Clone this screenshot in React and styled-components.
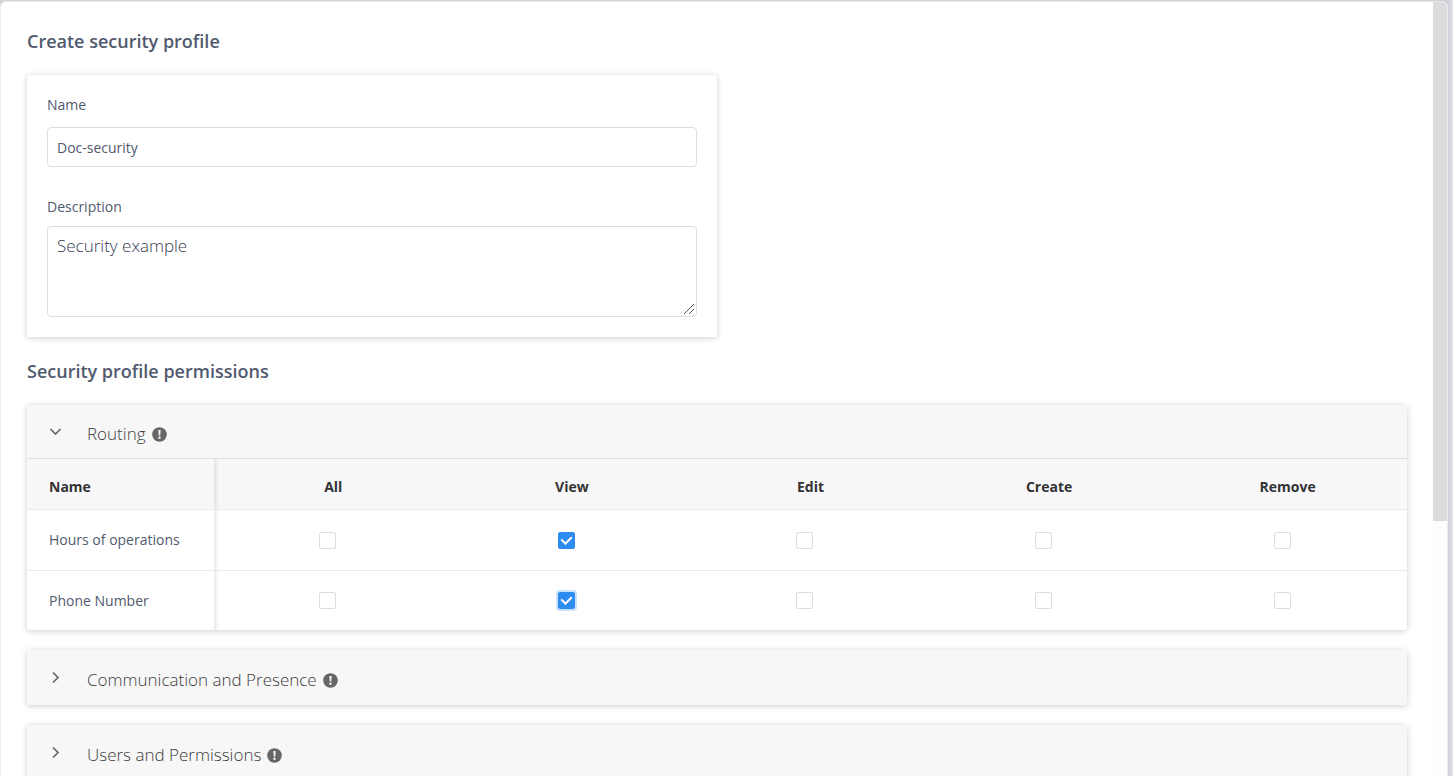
import React, { useState } from 'react';
import styled, { createGlobalStyle } from 'styled-components';

const GlobalStyle = createGlobalStyle`
  * {
    box-sizing: border-box;
  }
  body {
    margin: 0;
    background: #e1e1ea;
    color: #515a6e;
    font-family: 'Open Sans', 'Noto Sans', sans-serif;
    font-size: 14px;
    line-height: 20px;
  }
`;

const Page = styled.div`
  height: 100vh;
  padding: 1px 5px 0 0;
  background: linear-gradient(to right, #d3d3d6 50%, #cfcfd8 calc(100% - 5px), #e1e1ea);
`;

const Panel = styled.main`
  display: flex;
  height: 100%;
  overflow: hidden;
  border: 1px solid #ececee;
  border-bottom: 0;
  border-radius: 6px 6px 0 0;
  background: #fff;
`;

const Content = styled.div`
  flex: 1;
  min-width: 0;
  padding: 27px 26px 20px;
`;

const ScrollTrack = styled.div`
  width: 14px;
  background: #fdfdfd;
`;

const ScrollThumb = styled.div`
  height: 67%;
  background: #dcdcdc;
`;

const Title = styled.h2`
  margin: 0 0 22px;
  font-size: 18px;
  font-weight: 600;
  line-height: 24px;
`;

const Card = styled.section`
  border-radius: 3px;
  background: #fff;
  box-shadow: 0 1px 6px rgba(0, 0, 0, 0.2);
`;

const FormCard = styled(Card)`
  display: flex;
  flex-direction: column;
  gap: 30px;
  width: 50%;
  margin-bottom: 22px;
  padding: 20px;
`;

const Field = styled.div`
  display: flex;
  flex-direction: column;
  gap: ${(p) => p.$gap}px;
`;

const Input = styled.input`
  height: 40px;
  padding: 0 9px;
  border: 1px solid #dcdee2;
  border-radius: 4px;
  outline: none;
  background: #fff;
  color: #515a6e;
  font: inherit;
`;

const TextArea = styled.textarea`
  height: 91px;
  padding: 7px 9px;
  border: 1px solid #dcdee2;
  border-radius: 4px;
  outline: none;
  background: #fff;
  color: #343c50;
  font-family: inherit;
  font-size: 17px;
  font-weight: 300;
  line-height: 24px;
  resize: vertical;

  &::-webkit-resizer {
    background: url("data:image/svg+xml,%3Csvg xmlns='http://www.w3.org/2000/svg' width='15' height='15'%3E%3Cpath d='M3 13L13 3M8 13L13 8' stroke='%23555' fill='none'/%3E%3C/svg%3E")
      no-repeat right bottom;
  }
`;

const Groups = styled.div`
  display: flex;
  flex-direction: column;
  gap: 20px;
`;

const GroupHeader = styled.button`
  display: flex;
  align-items: center;
  width: 100%;
  height: ${(p) => (p.$open ? 54 : 55)}px;
  padding: 4px 21px 0;
  border: 0;
  border-bottom: ${(p) => (p.$open ? '1px solid #dcdee2' : '0')};
  border-radius: ${(p) => (p.$open ? '3px 3px 0 0' : '3px')};
  background: #f7f7f7;
  color: #3c3c3c;
  font-family: inherit;
  font-size: 17px;
  font-weight: 300;
  line-height: 24px;
  text-align: left;
  cursor: pointer;
`;

const Arrow = styled.svg`
  width: 15px;
  height: 15px;
  margin-right: 24px;
  margin-bottom: 4px;
  transform: ${(p) => (p.$open ? 'rotate(90deg)' : 'none')};
`;

const InfoIcon = styled.svg`
  width: 15px;
  height: 15px;
  margin: 2px 0 0 6px;
`;

const Table = styled.table`
  width: 100%;
  table-layout: fixed;
  border-spacing: 0;
`;

const HeadCell = styled.th`
  height: 51px;
  padding: 5px 0 0;
  border-bottom: 1px solid #e8eaec;
  background: #f8f8fa;
  color: #333;
  font-weight: 700;
  text-align: center;
`;

const Cell = styled.td`
  height: 61px;
  padding: 0 11px 0 0;
  border-bottom: 1px solid #e8eaec;
  text-align: center;

  tr:last-child > & {
    height: 59px;
    border-bottom: 0;
  }
`;

const edgeShadow = `
  position: relative;
  padding-left: 22px;
  text-align: left;

  &::after {
    content: '';
    position: absolute;
    top: 0;
    bottom: 0;
    left: 100%;
    width: 5px;
    background: linear-gradient(to right, rgba(0, 0, 0, 0.09), rgba(0, 0, 0, 0));
  }
`;

const NameHeadCell = styled(HeadCell)`
  width: 187px;
  ${edgeShadow}
`;

const NameCell = styled(Cell).attrs({ as: 'th', scope: 'row' })`
  font-weight: 400;
  ${edgeShadow}
`;

const Checkbox = styled.input.attrs({ type: 'checkbox' })`
  appearance: none;
  display: grid;
  place-content: center;
  width: 17px;
  height: 17px;
  margin: 0 auto;
  border: 1px solid #dcdee2;
  border-radius: 2px;
  outline: none;
  background: #fff;
  cursor: pointer;

  &:checked {
    border-color: #2d8cf0;
    background: #2d8cf0;
    box-shadow: ${(p) => (p.$active ? '0 0 0 2px rgba(45, 140, 240, 0.25)' : 'none')};
  }

  &:checked::after {
    content: '';
    width: 5px;
    height: 8px;
    margin-bottom: 3px;
    border: solid #fff;
    border-width: 0 2px 2px 0;
    transform: rotate(45deg);
  }
`;

const columns = ['All', 'View', 'Edit', 'Create', 'Remove'];
const permissions = ['Hours of operations', 'Phone Number'];

function PermissionTable() {
  const [checked, setChecked] = useState({
    'Hours of operations-View': true,
    'Phone Number-View': true,
  });
  const [active, setActive] = useState('Phone Number-View');

  const toggle = (key) => {
    setChecked({ ...checked, [key]: !checked[key] });
    setActive(key);
  };

  return (
    <Table>
      <thead>
        <tr>
          <NameHeadCell scope="col">Name</NameHeadCell>
          {columns.map((column) => (
            <HeadCell key={column} scope="col">{column}</HeadCell>
          ))}
        </tr>
      </thead>
      <tbody>
        {permissions.map((name) => (
          <tr key={name}>
            <NameCell>{name}</NameCell>
            {columns.map((column) => {
              const key = `${name}-${column}`;
              return (
                <Cell key={key}>
                  <Checkbox
                    aria-label={`${name}: ${column}`}
                    checked={!!checked[key]}
                    onChange={() => toggle(key)}
                    $active={active === key}
                  />
                </Cell>
              );
            })}
          </tr>
        ))}
      </tbody>
    </Table>
  );
}

function Group({ title, defaultOpen, children }) {
  const [open, setOpen] = useState(!!defaultOpen);
  return (
    <Card>
      <GroupHeader type="button" $open={open} aria-expanded={open} onClick={() => setOpen(!open)}>
        <Arrow $open={open} viewBox="0 0 15 15" aria-hidden="true">
          <path d="M5 2.5l5 5-5 5" fill="none" stroke="#666" strokeWidth="1.7" />
        </Arrow>
        {title}
        <InfoIcon viewBox="0 0 15 15" aria-hidden="true">
          <circle cx="7.5" cy="7.5" r="7.3" fill="#666" />
          <path d="M6.4 3h2.2l-.3 5.4H6.7z" fill="#f7f7f7" />
          <circle cx="7.5" cy="10.8" r="1.2" fill="#f7f7f7" />
        </InfoIcon>
      </GroupHeader>
      {open && children}
    </Card>
  );
}

export default function App() {
  return (
    <>
      <GlobalStyle />
      <Page>
        <Panel>
          <Content>
            <Title>Create security profile</Title>
            <FormCard>
              <Field $gap={12}>
                <label htmlFor="name">Name</label>
                <Input id="name" type="text" defaultValue="Doc-security" />
              </Field>
              <Field $gap={9}>
                <label htmlFor="description">Description</label>
                <TextArea id="description" defaultValue="Security example" />
              </Field>
            </FormCard>
            <Title>Security profile permissions</Title>
            <Groups>
              <Group title="Routing" defaultOpen>
                <PermissionTable />
              </Group>
              <Group title="Communication and Presence" />
              <Group title="Users and Permissions" />
            </Groups>
          </Content>
          <ScrollTrack>
            <ScrollThumb />
          </ScrollTrack>
        </Panel>
      </Page>
    </>
  );
}
